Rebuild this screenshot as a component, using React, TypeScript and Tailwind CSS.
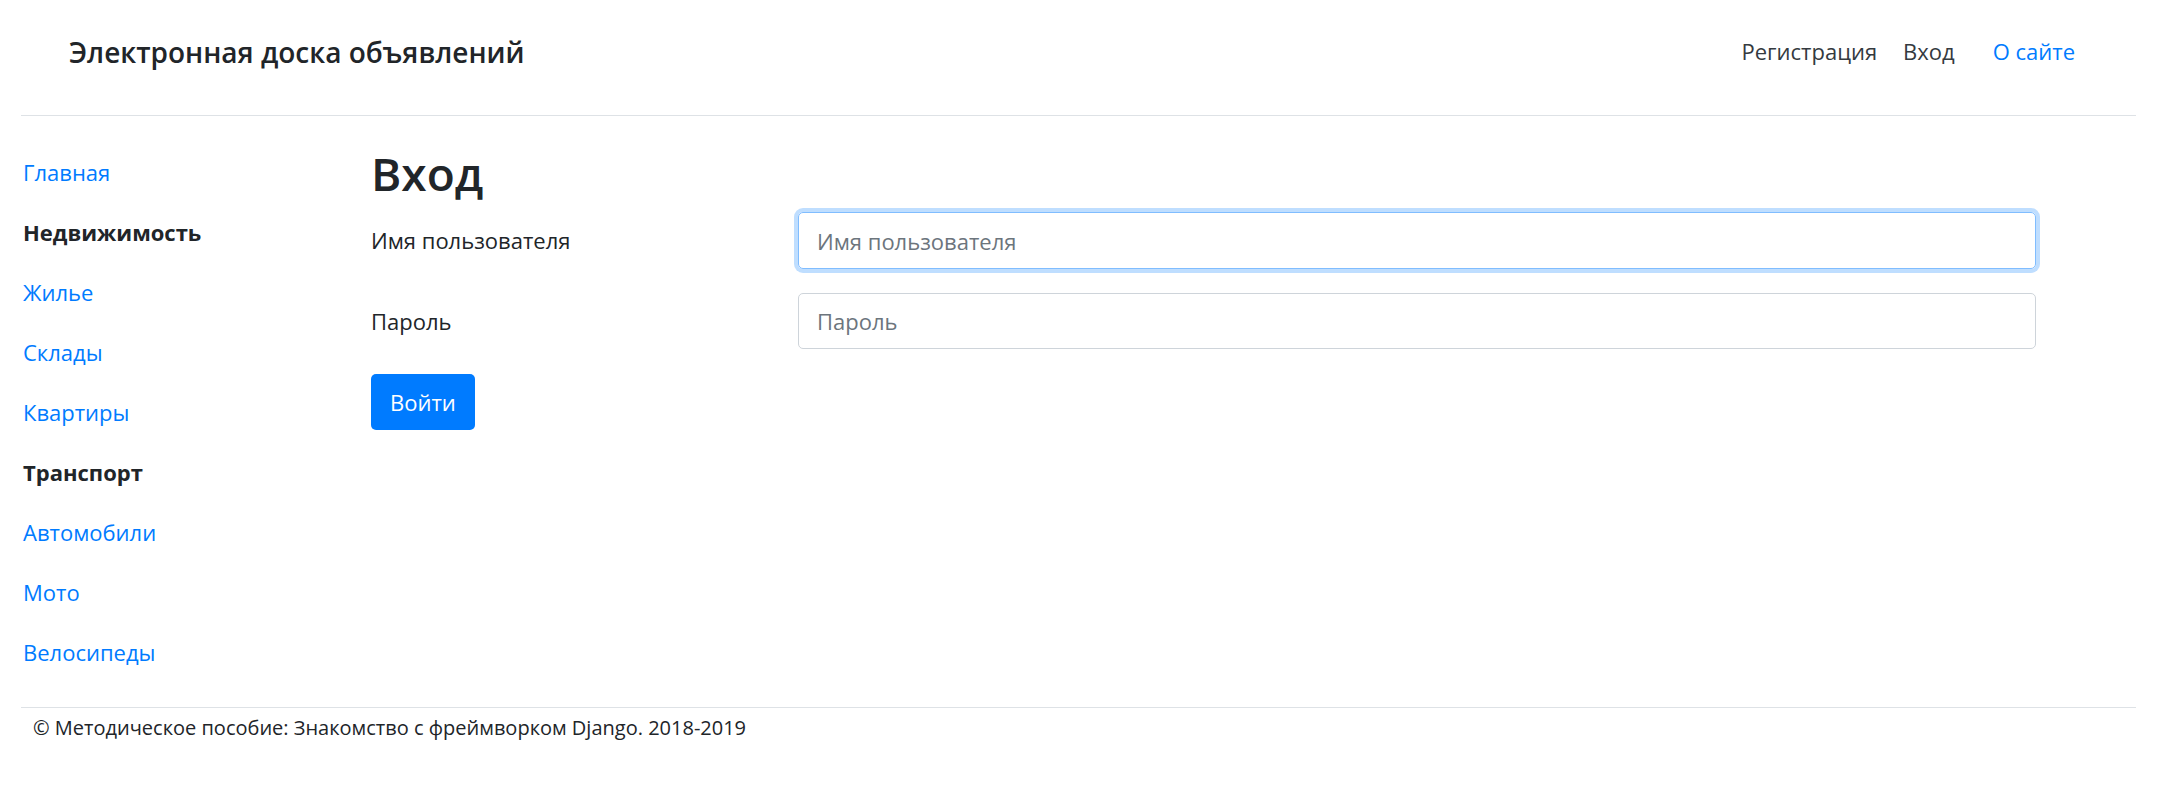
export default function App() {
  const sections = [
    { title: "Главная", link: true },
    { title: "Недвижимость", link: false },
    { title: "Жилье", link: true },
    { title: "Склады", link: true },
    { title: "Квартиры", link: true },
    { title: "Транспорт", link: false },
    { title: "Автомобили", link: true },
    { title: "Мото", link: true },
    { title: "Велосипеды", link: true },
  ];

  return (
    <div
      className="min-h-screen w-full bg-white text-[#212529] text-[22px]"
      style={{ fontFamily: '"Segoe UI", "Open Sans", "Noto Sans", sans-serif' }}
    >
      {/* Header */}
      <header className="mx-[21px] h-[116px] pb-[12px] border-b border-[#dee2e6] flex items-center justify-between">
        <a href="#" className="pl-[48px] text-[28px] font-semibold text-[#212529]">
          Электронная доска объявлений
        </a>
        <nav className="flex items-center pr-[61px]">
          <a href="#" className="text-[#343a40]">
            Регистрация
          </a>
          <a href="#" className="ml-[26px] text-[#343a40]">
            Вход
          </a>
          <a href="#" className="ml-[38px] text-[#007bff]">
            О сайте
          </a>
        </nav>
      </header>

      <div className="flex">
        {/* Sidebar */}
        <nav className="w-[371px] shrink-0 pl-[23px] pt-[26px] flex flex-col">
          {sections.map((s) =>
            s.link ? (
              <a
                key={s.title}
                href="#"
                className="h-[60px] flex items-center text-[#007bff]"
              >
                {s.title}
              </a>
            ) : (
              <span
                key={s.title}
                className="h-[60px] flex items-center font-bold text-[#212529]"
              >
                {s.title}
              </span>
            )
          )}
        </nav>

        {/* Main */}
        <main className="flex-1 pt-[27px] pr-[121px]">
          <h1 className="text-[46px] leading-[60px] font-semibold mb-[9px]">Вход</h1>
          <form className="flex flex-col">
            <div className="flex items-center h-[57px]">
              <label className="w-[427px] shrink-0">Имя пользователя</label>
              <input
                type="text"
                placeholder="Имя пользователя"
                className="flex-1 h-[57px] px-[18px] rounded-[5px] border border-[#80bdff] shadow-[0_0_0_4px_rgba(0,123,255,0.25)] outline-none placeholder:text-[#6c757d] text-[#495057]"
              />
            </div>
            <div className="flex items-center h-[56px] mt-[24px]">
              <label className="w-[427px] shrink-0">Пароль</label>
              <input
                type="password"
                placeholder="Пароль"
                className="flex-1 h-[56px] px-[18px] rounded-[5px] border border-[#ced4da] outline-none placeholder:text-[#6c757d] text-[#495057]"
              />
            </div>
            <div className="mt-[25px]">
              <button
                type="button"
                className="h-[56px] px-[19px] rounded-[5px] bg-[#007bff] text-white"
              >
                Войти
              </button>
            </div>
          </form>
        </main>
      </div>

      {/* Footer */}
      <footer className="mx-[21px] mt-[25px] border-t border-[#dee2e6] pt-[3px] pl-[12px] text-[20px] leading-[33px]">
        © Методическое пособие: Знакомство с фреймворком Django. 2018-2019
      </footer>
    </div>
  );
}
